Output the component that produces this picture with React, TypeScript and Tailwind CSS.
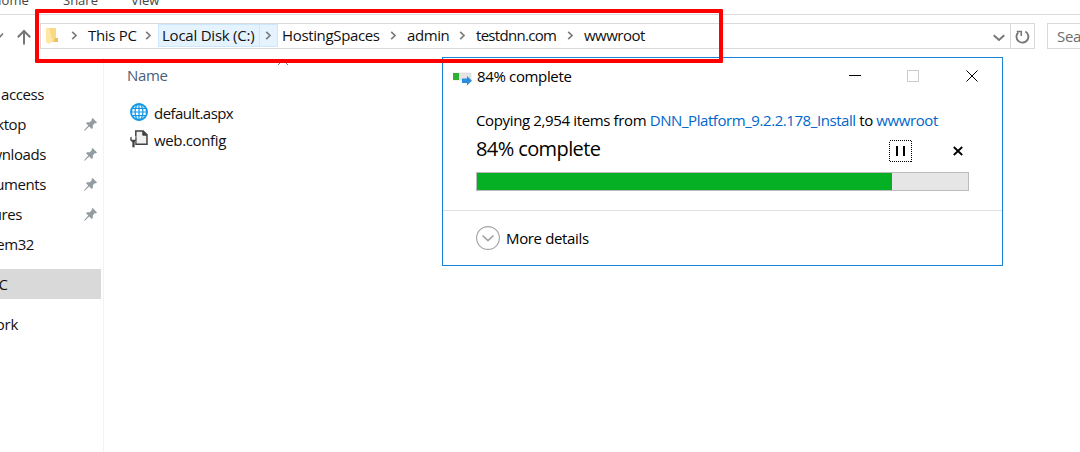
import { clsx } from "clsx";

const crumbs = [
  { label: "This PC", box: "w-[27px]", text: "w-[47px] tracking-[-0.3px]" },
  { label: "Local Disk (C:)", box: "w-[27px]", text: "w-[93px] tracking-[-0.23px]", active: true },
  { label: "HostingSpaces", box: "w-[27px]", text: "w-[98px] tracking-[-0.35px]" },
  { label: "admin", box: "w-[27px]", text: "w-[42px] tracking-[-0.4px]" },
  { label: "testdnn.com", box: "w-[27px]", text: "w-[80px] tracking-[-0.7px]" },
  { label: "wwwroot", box: "w-[28px]", text: "w-[61px] tracking-[-0.5px]" },
];

const places = [
  { label: "access", width: "w-[44px]" },
  { label: "ktop", width: "w-[26px]", pinned: true },
  { label: "wnloads", width: "w-[46px]", pinned: true },
  { label: "uments", width: "w-[46px]", pinned: true },
  { label: "ures", width: "w-[22px]", pinned: true },
  { label: "em32", width: "w-[34px]" },
];

function Chevron() {
  return (
    <svg width="7" height="9" viewBox="0 0 7 9" fill="none" stroke="#7c7c7c" strokeWidth="1.7">
      <path d="M1.2 0.8 5 4.5 1.2 8.2" />
    </svg>
  );
}

function Pin() {
  return (
    <svg width="13" height="13" viewBox="0 0 13 13" className="absolute left-[84px] top-[8px]" fill="#939ca1">
      <path d="M8.6 0 13 4.4 11.8 5.4 10.9 5.1 8.9 7.2 8.8 10 7.7 11 5.2 8.5 0.8 12.7 0.1 12.6 0.3 11.9 4.3 7.6 2 5.3 3.1 4.2 5.8 4.2 7.9 2.1 7.6 1.1z" />
    </svg>
  );
}

function Globe() {
  return (
    <svg width="18" height="18" viewBox="0 0 18 18" fill="none" stroke="#1397e6">
      <circle cx="9" cy="9" r="8" strokeWidth="1.9" />
      <ellipse cx="9" cy="9" rx="3.9" ry="8" strokeWidth="1.2" />
      <path d="M9 1v16M1 9h16M2.5 5.3h13M2.5 12.7h13" strokeWidth="1.2" />
    </svg>
  );
}

function ConfigFile() {
  return (
    <svg width="18" height="18" viewBox="0 0 18 18">
      <path d="M5.8 1h7.4L17 4.8V14.2H5.8z" fill="#f0eff1" stroke="#424242" strokeWidth="1.5" />
      <path d="M12.8 1v4.2H17" fill="#424242" stroke="#424242" />
      <path d="M0 7.2v3.1l2.1 2V17.5h2.8v-5.2l2-2V7.2L5.2 6.6v3H1.9v-3z" fill="#424242" stroke="#fff" strokeWidth="0.5" />
    </svg>
  );
}

function AddressBar() {
  return (
    <div className="flex h-[42px] pt-2">
      <div className="flex w-10 shrink-0">
        <svg width="40" height="26" viewBox="0 0 40 26" fill="none" stroke="#777">
          <path d="M-3 10.5 0 13.8 3 10.5" strokeWidth="1.6" />
          <path d="M24 21.5V8M17.8 14.2 24 8l6.2 6.2" strokeWidth="2" />
        </svg>
      </div>
      <div className="flex h-[26px] w-[995px] shrink-0 border border-[#d9d9d9]">
        <svg width="20" height="24" viewBox="0 0 20 24">
          <path d="M5 4h10v14H5z" fill="#f5cf72" />
          <path d="M5 4h5l2 2v11l-4 3-3-2z" fill="#ffe8a4" />
          <path d="M8 4h7v11h-4z" fill="#fad984" />
          <path d="M14 14h3v4h-3z" fill="#eebf57" />
        </svg>
        <div className="flex">
          {crumbs.map((c, i) => (
            <div key={c.label} className="flex">
              <span
                className={clsx(
                  "flex h-[23px] items-center justify-center",
                  crumbs[i - 1]?.active
                    ? "ml-[4px] mr-[4px] w-[19px] border border-[#cce8ff] bg-[#e5f3ff]"
                    : c.box
                )}
              >
                <Chevron />
              </span>
              <span
                className={clsx(
                  "whitespace-nowrap",
                  c.active
                    ? "-ml-1 -mr-[5px] h-[23px] w-[102px] border border-[#cce8ff] bg-[#e5f3ff] pl-[3px] leading-[21px] tracking-[-0.23px]"
                    : ["leading-[23px]", c.text]
                )}
              >
                {c.label}
              </span>
            </div>
          ))}
        </div>
        <div className="ml-auto flex">
          <svg width="22" height="24" viewBox="0 0 22 24" fill="none" stroke="#777" strokeWidth="2">
            <path d="M5.7 11.2 11 16l5.3-4.8" />
          </svg>
          <svg width="24" height="24" viewBox="0 0 24 24" fill="none" stroke="#777" className="border-l border-[#d9d9d9]">
            <path d="M15 7.3a6.2 6.2 0 1 1-7.4.9" strokeWidth="2" />
            <path d="M6 7.2h4.7v4.8" strokeWidth="1.6" />
          </svg>
        </div>
      </div>
      <div className="ml-3 h-[26px] w-[60px] shrink-0 border border-[#d9d9d9] pl-[9px] leading-[25px] tracking-[-0.3px] text-[#6d6d6d]">
        Sea
      </div>
    </div>
  );
}

function Sidebar() {
  return (
    <div className="h-full w-[104px] shrink-0 border-r border-[#f3f3f3] pt-[23px]">
      {places.map((p) => (
        <div key={p.label} className="relative h-[30px]">
          <div className={clsx("flex h-[30px] justify-end overflow-hidden whitespace-nowrap leading-[29px] tracking-[-0.4px]", p.width)}>
            {p.label}
          </div>
          {p.pinned && <Pin />}
        </div>
      ))}
      <div className="mt-[9px] h-[30px] w-[101px] bg-[#d9d9d9] leading-[30px]">
        <div className="flex w-2 justify-end">C</div>
      </div>
      <div className="mt-[10px] flex h-[30px] w-[18px] justify-end leading-[30px] tracking-[-0.3px]">ork</div>
    </div>
  );
}

function CopyDialog() {
  return (
    <div className="absolute left-[442px] top-[57px] flex h-[209px] w-[561px] flex-col border border-[#1883d7] bg-white text-black">
      <div className="flex h-[38px] items-center">
        <svg width="20" height="14" viewBox="0 0 20 14" className="ml-[10px] mt-[4px]">
          <path d="M0 1h18v7H0z" fill="#e5e5e5" stroke="#cfcfcf" strokeWidth=".5" />
          <path d="M0 1h6v7H0z" fill="#2eb135" />
          <path d="M9 6.5h5V4l5 4.7-5 4.8V11H9z" fill="#2d8ddd" />
        </svg>
        <span className="ml-1 -mt-[2px] whitespace-nowrap tracking-[-0.35px]">84% complete</span>
        <svg width="130" height="13" viewBox="0 0 130 13" className="ml-auto mr-[23px] -mt-[1px]" fill="none" shapeRendering="crispEdges">
          <path d="M0 5.5h12" stroke="#000" />
          <path d="M58.5.5h11v11h-11z" stroke="#ccc" />
          <path d="M117.5.5l11 11M128.5.5l-11 11" stroke="#000" shapeRendering="auto" />
        </svg>
      </div>
      <div className="h-[115px] border-b border-[#dfdfdf] pl-[33px]">
        <div className="pt-[13px] leading-[23px] whitespace-nowrap tracking-[-0.4px]">
          <span className="tracking-[-0.36px]">Copying 2,954 items from </span>
          <span className="text-[#0066cc] tracking-[-0.43px]">DNN_Platform_9.2.2.178_Install</span> to{" "}
          <span className="text-[#0066cc]">wwwroot</span>
        </div>
        <div className="flex h-[40px]">
          <span className="w-[413px] text-[20px] leading-[33px] tracking-[-0.6px]">84% complete</span>
          <svg width="80" height="23" viewBox="0 0 80 23" className="mt-[8px]" fill="none" stroke="#000">
            <path d="M.5.5h22v21H.5z" strokeDasharray="1 1" shapeRendering="crispEdges" />
            <path d="M8 6v10M15 6v10" strokeWidth="2" />
            <path d="M64.8 7l8.4 8M73.2 7l-8.4 8" strokeWidth="1.8" />
          </svg>
        </div>
        <div className="h-[19px] w-[493px] border border-[#bcbcbc] bg-[#e6e6e6]">
          <div className="h-full w-[415px] bg-[#06b025]" />
        </div>
      </div>
      <div className="flex h-[54px] items-center gap-[6px] pl-[33px]">
        <svg width="24" height="24" viewBox="0 0 24 24" fill="none" stroke="#a3a3a8">
          <circle cx="12" cy="12" r="11.4" strokeWidth="1.1" />
          <path d="M6.5 9.5 12 14.7l5.5-5.2" strokeWidth="1.7" />
        </svg>
        <span className="tracking-[-0.35px]">More details</span>
      </div>
    </div>
  );
}

export default function App() {
  return (
    <div className="relative flex h-[452px] w-[1080px] flex-col overflow-hidden bg-white font-['Open_Sans','Noto_Sans',sans-serif] text-[15px] leading-5 text-[#111]">
      <div className="flex h-[15px] shrink-0 overflow-hidden border-b border-[#dadbdc] text-[13px] text-[#444]">
        <span className="-mt-[10px] -ml-[8px] w-[71px]">Home</span>
        <span className="-mt-[10px] w-[68px]">Share</span>
        <span className="-mt-[10px]">View</span>
      </div>
      <AddressBar />
      <div className="flex min-h-0 flex-1">
        <Sidebar />
        <div className="relative flex-1 pl-[23px]">
          <svg width="10" height="6" viewBox="0 0 10 6" className="absolute left-[174px] top-[2px]" fill="none" stroke="#777">
            <path d="M0 6 5 1l5 5" />
          </svg>
          <div className="pt-[8px] tracking-[-0.3px] text-[#4c607a]">Name</div>
          <div className="mt-[18px] ml-[3px] flex h-[27px] gap-[6px]">
            <Globe />
            <span className="leading-[20px] tracking-[-0.55px]">default.aspx</span>
          </div>
          <div className="ml-[3px] flex h-[27px] gap-[6px]">
            <ConfigFile />
            <span className="leading-[20px] tracking-[-0.35px]">web.config</span>
          </div>
        </div>
      </div>
      <CopyDialog />
      <div className="absolute left-[35px] top-[9px] h-[54px] w-[688px] rounded-[1px] border-4 border-[#ff0000]" />
    </div>
  );
}
